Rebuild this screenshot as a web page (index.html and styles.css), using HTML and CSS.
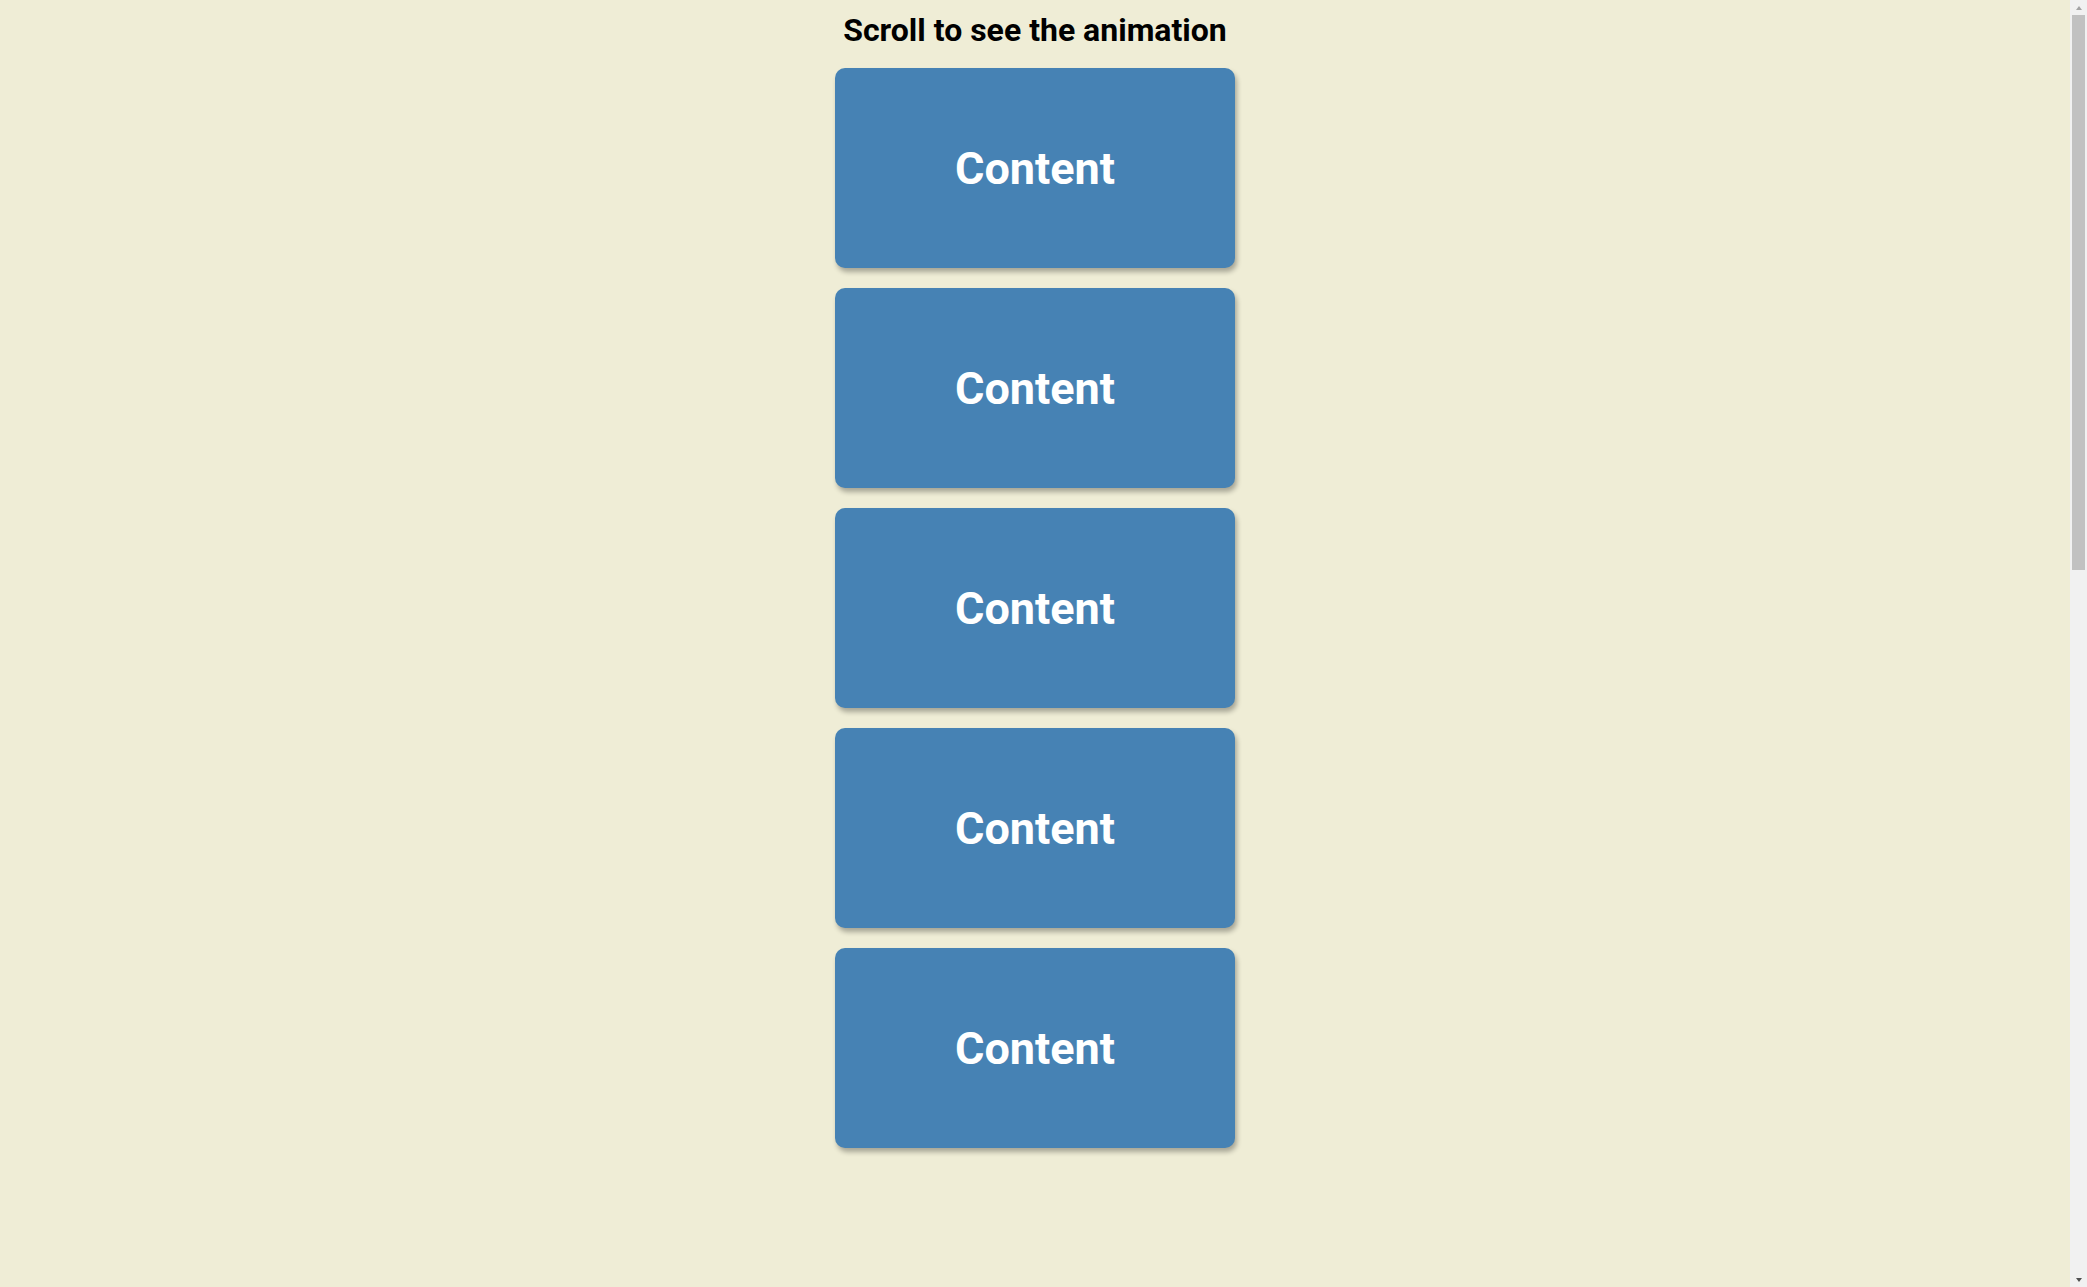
FILE: index.html
```html
<!DOCTYPE html>
<html lang="en">
<head>
<meta charset="UTF-8">
<title>Scroll Animation</title>
<link rel="stylesheet" href="styles.css">
</head>
<body>
<main class="page">
  <h1 class="title">Scroll to see the animation</h1>
  <div class="box"><h2 class="box-text">Content</h2></div>
  <div class="box"><h2 class="box-text">Content</h2></div>
  <div class="box"><h2 class="box-text">Content</h2></div>
  <div class="box"><h2 class="box-text">Content</h2></div>
  <div class="box"><h2 class="box-text">Content</h2></div>
</main>
<div class="scrollbar" aria-hidden="true">
  <div class="sb-btn"><span class="sb-arrow-up"></span></div>
  <div class="sb-track"><div class="sb-thumb"></div></div>
  <div class="sb-btn"><span class="sb-arrow-down"></span></div>
</div>
</body>
</html>
```
FILE: styles.css
```css
* {
  box-sizing: border-box;
}

html,
body {
  height: 100%;
}

body {
  background-color: #efedd6;
  font-family: Roboto, "Liberation Sans", sans-serif;
  margin: 0;
  overflow: hidden;
  display: grid;
  grid-template-columns: 1fr 17px;
}

.page {
  display: flex;
  flex-direction: column;
  align-items: center;
  justify-content: flex-start;
  min-width: 0;
}

.title {
  margin: 10px 10px 7.5px;
  font-size: 32px;
  line-height: 40px;
}

.box {
  background-color: steelblue;
  color: #fff;
  display: flex;
  align-items: center;
  justify-content: center;
  flex: 0 0 200px;
  width: 400px;
  height: 200px;
  margin: 10px;
  border-radius: 10px;
  box-shadow: 2px 4px 5px rgba(0, 0, 0, 0.3);
}

.box-text {
  font-size: 45px;
  margin: 0;
  padding-top: 2.6px;
}

.scrollbar {
  background: #f1f1f1;
  display: flex;
  flex-direction: column;
  height: 100%;
}

.sb-btn {
  flex: 0 0 15px;
  display: flex;
  align-items: center;
  justify-content: center;
}

.sb-arrow-up {
  width: 0;
  height: 0;
  border-left: 3.5px solid transparent;
  border-right: 3.5px solid transparent;
  border-bottom: 4px solid #a3a3a3;
}

.sb-arrow-down {
  width: 0;
  height: 0;
  border-left: 3.5px solid transparent;
  border-right: 3.5px solid transparent;
  border-top: 4px solid #505050;
}

.sb-track {
  flex: 1 1 auto;
  padding: 0 2px;
}

.sb-thumb {
  height: 555px;
  background: #c1c1c1;
}
```
